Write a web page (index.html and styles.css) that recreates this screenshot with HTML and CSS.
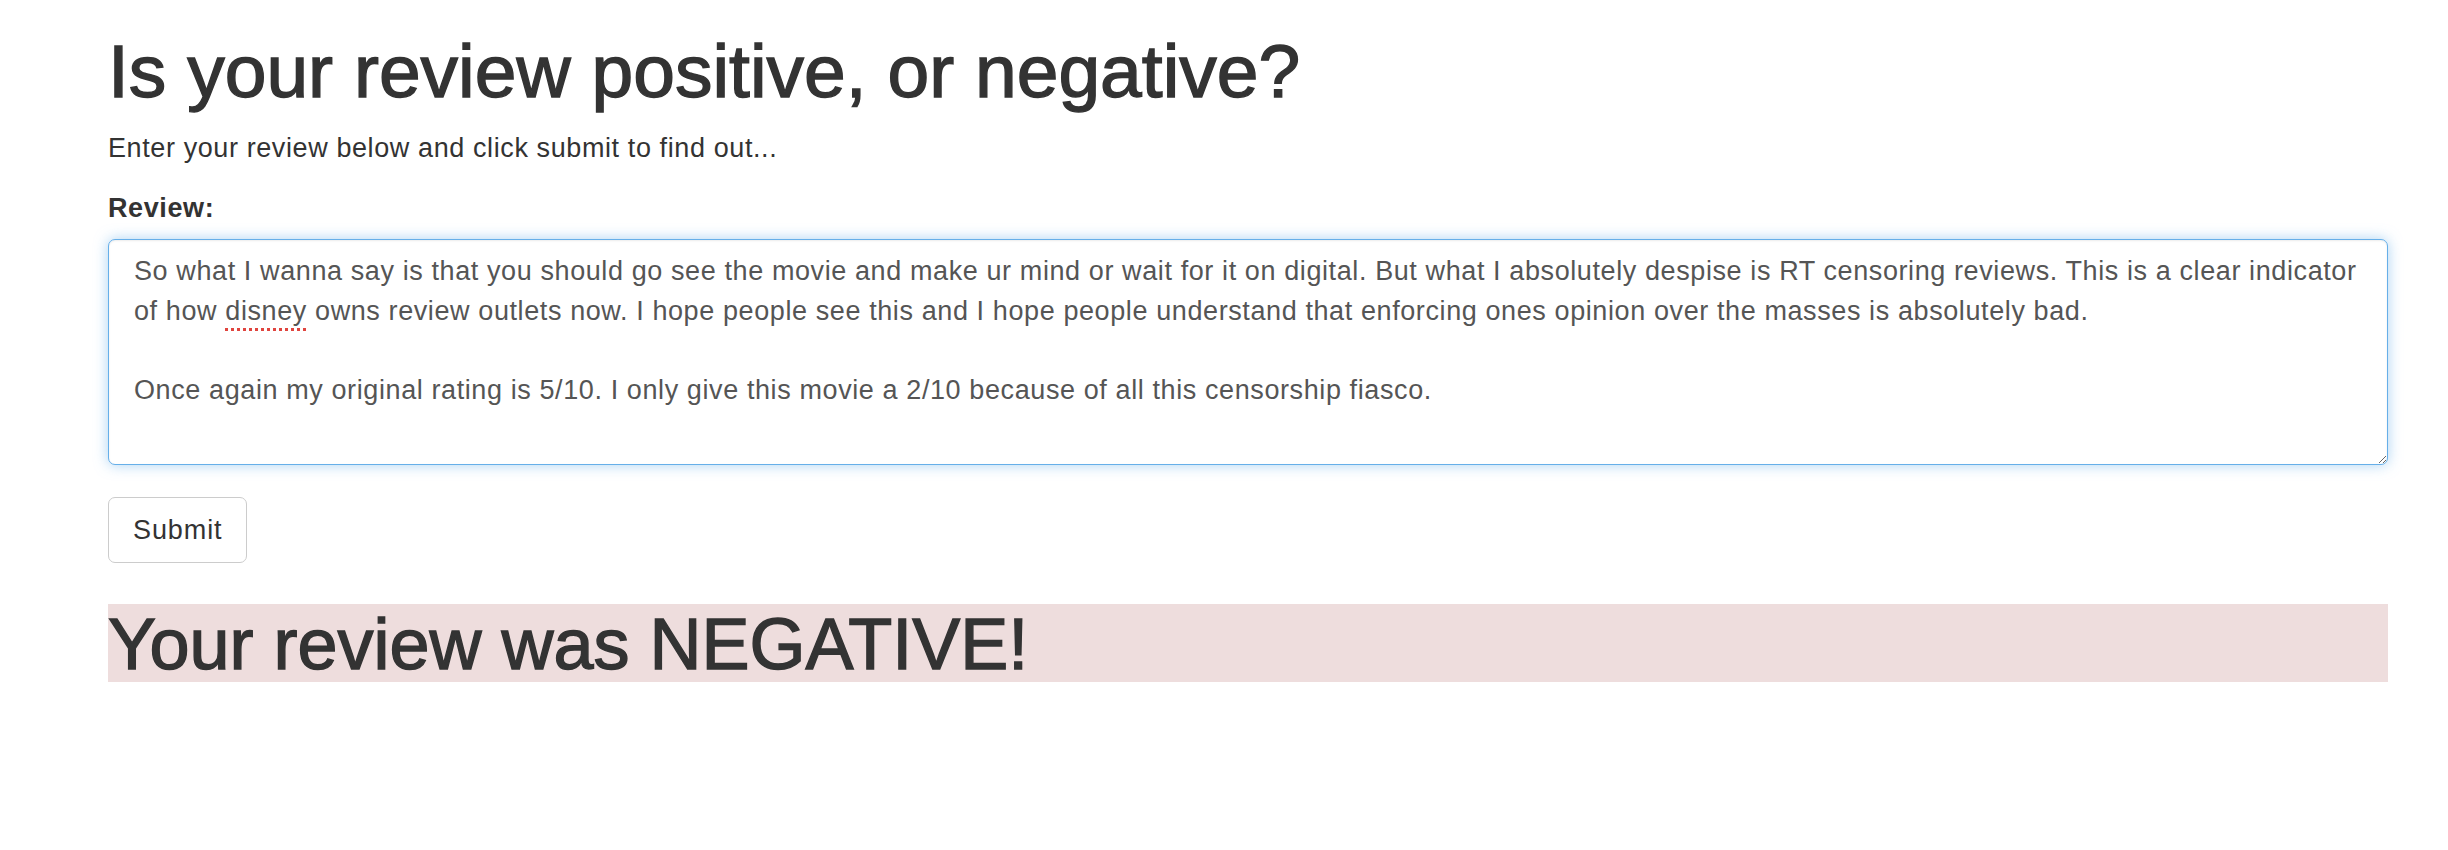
FILE: index.html
```html
<!DOCTYPE html>
<html lang="en">
<head>
<meta charset="utf-8">
<title>Review sentiment</title>
<link rel="stylesheet" href="styles.css">
</head>
<body>
<div class="container">
  <h1 class="title">Is your review positive, or negative?</h1>
  <p class="lead-text">Enter your review below and click submit to find out...</p>
  <form class="review-form">
    <label class="field-label" id="review-label">Review:</label>
    <div class="review-input" role="textbox" aria-multiline="true" aria-labelledby="review-label" contenteditable="true" spellcheck="false">So what I wanna say is that you should go see the movie and make ur mind or wait for it on digital. But what I absolutely despise is RT censoring reviews. This is a clear indicator of how <span class="misspelled">disney</span> owns review outlets now. I hope people see this and I hope people understand that enforcing ones opinion over the masses is absolutely bad.

Once again my original rating is 5/10. I only give this movie a 2/10 because of all this censorship fiasco.</div>
    <div class="actions">
      <button type="button" class="btn">Submit</button>
    </div>
  </form>
  <h1 class="result result-negative">Your review was NEGATIVE!</h1>
</div>
</body>
</html>
```

FILE: styles.css
```css
html, body {
  margin: 0;
  padding: 0;
  background: #ffffff;
}

body {
  font-family: "Liberation Sans", Arial, Helvetica, sans-serif;
  color: #333333;
}

.container {
  padding: 0 60px 0 108px;
}

.title {
  margin: 30px 0 0;
  font-size: 75px;
  line-height: 82px;
  font-weight: normal;
  -webkit-text-stroke: 1.4px #333333;
  color: #333333;
}

.lead-text {
  margin: 16px 0 0;
  font-size: 27px;
  letter-spacing: 0.6px;
  line-height: 40px;
}

.review-form {
  display: flex;
  flex-direction: column;
  margin-top: 20px;
}

.field-label {
  font-size: 27px;
  letter-spacing: 0.6px;
  line-height: 40px;
  font-weight: bold;
}

.review-input {
  margin-top: 11px;
  display: block;
  box-sizing: border-box;
  width: 100%;
  height: 226px;
  padding: 12px 25px;
  font-family: "Liberation Sans", Arial, Helvetica, sans-serif;
  font-size: 27px;
  letter-spacing: 0.6px;
  line-height: 39.5px;
  color: #555555;
  background: #ffffff;
  border: 1.5px solid #66afe9;
  border-radius: 7px;
  outline: none;
  box-shadow: inset 0 1px 2px rgba(0, 0, 0, 0.075), 0 0 14px rgba(102, 175, 233, 0.55);
  white-space: pre-wrap;
  overflow: auto;
  resize: vertical;
}

.misspelled {
  text-decoration: underline dotted #e0443e;
  text-decoration-thickness: 3px;
  text-underline-offset: 8px;
}

.actions {
  margin-top: 32px;
}

.btn {
  box-sizing: border-box;
  height: 66px;
  padding: 12px 24px;
  font-family: "Liberation Sans", Arial, Helvetica, sans-serif;
  font-size: 27px;
  letter-spacing: 0.9px;
  line-height: 40px;
  color: #333333;
  background: #ffffff;
  border: 1.5px solid #cccccc;
  border-radius: 7px;
}

.result {
  margin: 41px 0 0;
  padding-top: 2px;
  height: 78px;
  box-sizing: border-box;
  font-size: 72px;
  line-height: 76px;
  font-weight: normal;
  -webkit-text-stroke: 1.4px #333333;
  color: #333333;
}

.result-negative {
  background: #eedddd;
}
```
